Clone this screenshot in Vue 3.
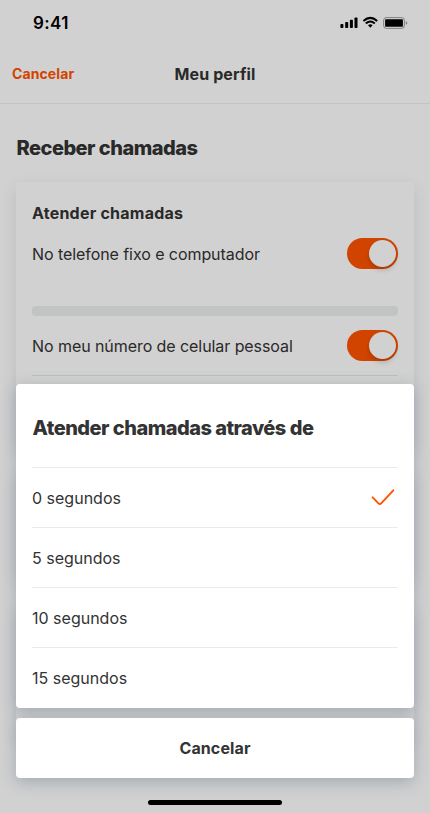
<script setup>
import { ref } from 'vue'

const calls = ['No telefone fixo e computador', 'No meu número de celular pessoal']
const options = ['0 segundos', '5 segundos', '10 segundos', '15 segundos']
const selected = ref(0)
</script>

<template>
  <main class="screen">
    <div class="page">
      <header class="nav">
        <span class="back">Cancelar</span>
        <span class="title">Meu perfil</span>
        <span></span>
      </header>
      <h1>Receber chamadas</h1>
      <section class="card first">
        <h2>Atender chamadas</h2>
        <template v-for="(label, i) in calls" :key="label">
          <div v-if="i" class="bar"></div>
          <div class="row">
            <span>{{ label }}</span>
            <span class="toggle"><i></i></span>
          </div>
        </template>
        <hr />
      </section>
      <section class="card second"></section>
      <section class="card third"></section>
    </div>

    <div class="overlay">
      <div class="status">
        <span class="time">9:41</span>
        <svg width="68" height="14" viewBox="0 0 68 14">
          <rect x="0.4" y="8" width="3" height="4" rx="0.8" />
          <rect x="5.2" y="6" width="3" height="6" rx="0.8" />
          <rect x="9.9" y="3.8" width="3" height="8.2" rx="0.8" />
          <rect x="14.5" y="1.4" width="3" height="10.6" rx="0.8" />
          <g fill="none" stroke="#000" stroke-width="2">
            <path d="M23.4 4.9Q30.3 -1.2 37.2 4.9" />
            <path d="M25.8 7.5Q30.3 3.5 34.8 7.5" />
          </g>
          <path d="M28 9.2Q30.3 7.5 32.6 9.2L30.3 11.7Z" />
          <rect x="43.6" y="1.6" width="20.8" height="10.8" rx="2.8" fill="none" stroke="#000" stroke-opacity=".38" />
          <rect x="45.1" y="3.2" width="17.8" height="7.6" rx="0.9" />
          <path d="M65.8 5.2Q67.3 5.7 67.3 7T65.8 8.8Z" fill-opacity=".4" />
        </svg>
      </div>
      <div class="sheet">
        <h1>Atender chamadas através de</h1>
        <ul>
          <li v-for="(option, i) in options" :key="option" @click="selected = i">
            <span>{{ option }}</span>
            <svg v-if="selected === i" width="24" height="18" viewBox="0 0 24 18">
              <path d="M1.7 8.3L7.4 14.3Q8.9 15.8 10.2 14.3L22.3 1.3" fill="none" stroke="#ff5300" stroke-width="1.9" stroke-linecap="round" />
            </svg>
          </li>
        </ul>
      </div>
      <button class="cancel">Cancelar</button>
      <div class="home"></div>
    </div>
  </main>
</template>

<style>
body {
  margin: 0;
}
</style>

<style scoped>
* {
  box-sizing: border-box;
}

.screen {
  position: relative;
  width: 430px;
  height: 813px;
  overflow: hidden;
  background: #fff;
  color: #333;
  font: 400 16px/20px Inter, sans-serif;
  letter-spacing: -0.07px;
}

.page {
  height: 813px;
  padding-top: 45px;
  overflow: hidden;
}

.nav {
  display: grid;
  grid-template-columns: 1fr auto 1fr;
  align-items: center;
  height: 59px;
  padding: 0 12px;
  border-bottom: 1px solid #eee;
}

.back {
  color: #ff5300;
  font-size: 14px;
  font-weight: 700;
  letter-spacing: 0.1px;
}

.title {
  font-weight: 700;
  letter-spacing: 0.12px;
}

h1 {
  margin: 0;
  font-size: 20px;
  line-height: 24px;
  font-weight: 800;
  letter-spacing: -0.52px;
  text-indent: 0.5px;
}

.page > h1 {
  padding: 32px 16px 0;
}

.card {
  margin: 0 16px;
  border-radius: 4px;
  background: #fff;
  box-shadow: 0 6px 16px rgba(43, 63, 108, 0.13);
}

.first {
  height: 263px;
  margin-top: 22px;
  padding: 21px 16px 0;
}

.second {
  height: 103px;
  margin-top: 27px;
}

.third {
  height: 130px;
  margin-top: 32px;
}

h2 {
  margin: 0;
  font-size: 16px;
  line-height: 20px;
  font-weight: 700;
  letter-spacing: 0.23px;
}

.row {
  display: flex;
  align-items: center;
  justify-content: space-between;
  height: 59px;
}

h2 + .row {
  height: 61px;
}

.toggle {
  display: flex;
  justify-content: flex-end;
  width: 51px;
  height: 31px;
  padding: 2px;
  border-radius: 16px;
  background: #ff5300;
}

.toggle i {
  width: 27px;
  height: 27px;
  border-radius: 50%;
  background: #fff;
  box-shadow: 0 3px 5px rgba(0, 0, 0, 0.18);
}

.bar {
  height: 10px;
  margin-top: 22px;
  border-radius: 4px;
  background: #edf0ee;
}

hr {
  height: 1px;
  margin: 0;
  border: 0;
  background: #e8e8e8;
}

.overlay {
  position: absolute;
  inset: 0;
  display: flex;
  flex-direction: column;
  padding: 0 16px;
  background: rgba(0, 0, 0, 0.18);
}

.status {
  display: flex;
  flex: 1;
  align-items: flex-start;
  justify-content: space-between;
  padding: 13px 6px 0 17px;
}

.status svg {
  margin-top: 3px;
}

.time {
  color: #000;
  font-size: 17px;
  font-weight: 600;
  letter-spacing: 0.4px;
}

.sheet,
.cancel {
  border-radius: 4px;
  background: #fff;
  box-shadow: 0 4px 16px rgba(43, 70, 100, 0.28);
}

.sheet {
  height: 324px;
  padding: 32px 16px 0;
}

ul {
  margin: 27px 0 0;
  padding: 0;
  list-style: none;
}

li {
  display: flex;
  align-items: center;
  justify-content: space-between;
  height: 60px;
  padding: 0 3px 0 0;
  border-top: 1px solid #ebebeb;
  letter-spacing: 0;
}

.cancel {
  height: 60px;
  margin-top: 10px;
  border: 0;
  color: #333;
  font: 700 16px/20px Inter, sans-serif;
  letter-spacing: 0.12px;
}

.home {
  width: 134px;
  height: 5px;
  margin: 22px auto 8px;
  border-radius: 3px;
  background: #000;
}
</style>
